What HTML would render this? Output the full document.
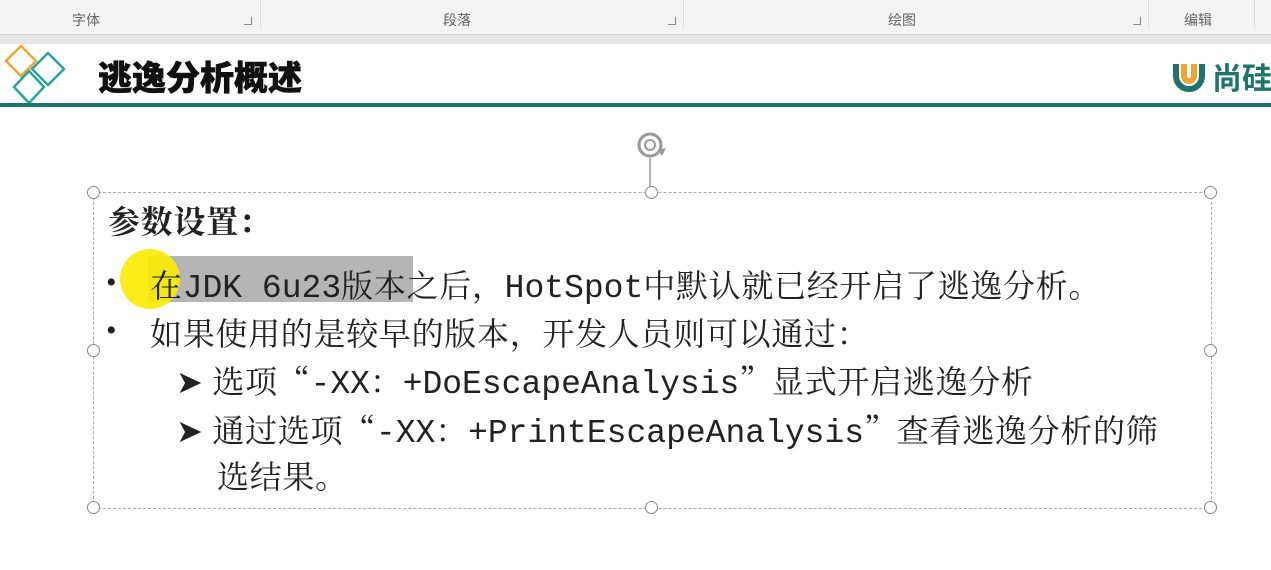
<!DOCTYPE html>
<html><head><meta charset="utf-8"><style>
body{margin:0;width:1271px;height:570px;overflow:hidden;background:#fff;position:relative;font-family:"Liberation Serif","Noto Serif CJK SC",serif;}
.rib{position:absolute;left:0;top:0;width:1271px;height:34px;background:#f3f3f3;}
.rib .l{position:absolute;top:10px;font:14px "Liberation Sans","Noto Sans CJK SC",sans-serif;color:#666;}
.rib .s{position:absolute;top:0;width:1px;height:28px;background:#dadada;}
.rib .c{position:absolute;top:17px;width:7px;height:7px;border-right:1px solid #888;border-bottom:1px solid #888;}
.sep{position:absolute;left:0;top:34px;width:1271px;height:9px;background:#e6e6e6;border-top:1px solid #d4d4d4;}
.title{position:absolute;left:98px;top:54px;font:900 34px "Noto Sans CJK SC",sans-serif;color:#111;line-height:44px;-webkit-text-stroke:0.6px #111;}
.bar{position:absolute;left:0;top:103px;width:1271px;height:4px;background:#1d7468;}
.t{position:absolute;font-family:"Noto Serif CJK SC",serif;font-size:32px;color:#222;white-space:nowrap;line-height:40px;letter-spacing:0.7px;}
.m{font-family:"Liberation Mono",monospace;font-size:33px;letter-spacing:0;}
.b{position:absolute;font:30px "Liberation Serif",serif;color:#222;}
.box{position:absolute;left:93px;top:192px;width:1117px;height:315px;border:1px dashed #aaa;}
.h{position:absolute;width:11px;height:11px;border:1.5px solid #888;border-radius:50%;background:#fff;}
</style></head><body>
<div class="rib">
<span class="l" style="left:72px">字体</span><span class="c" style="left:244px"></span><span class="s" style="left:260px"></span>
<span class="l" style="left:443px">段落</span><span class="c" style="left:668px"></span><span class="s" style="left:683px"></span>
<span class="l" style="left:888px">绘图</span><span class="c" style="left:1133px"></span><span class="s" style="left:1148px"></span>
<span class="l" style="left:1184px">编辑</span><span class="s" style="left:1254px"></span>
</div>
<div class="sep"></div>
<svg style="position:absolute;left:0;top:0" width="70" height="110">
<polygon points="21,46 36,61 21,76 6,61" fill="none" stroke="#f3a531" stroke-width="2.5"/>
<polygon points="48,53 64,69 48,85 32,69" fill="none" stroke="#2aa59a" stroke-width="2.5"/>
<polygon points="29,71 44,87 29,103 14,87" fill="none" stroke="#2aa59a" stroke-width="2.5"/>
</svg>
<div class="title">逃逸分析概述</div>
<svg style="position:absolute;left:1172px;top:58px" width="34" height="36"><path d="M4 6 V18 A13 13 0 0 0 30 18 V6" fill="none" stroke="#1d7468" stroke-width="6"/><path d="M12 6 V18 A5 5 0 0 0 22 18 V6" fill="none" stroke="#f3a531" stroke-width="6"/></svg>
<div style="position:absolute;left:1212px;top:58px;font:bold 30px 'Noto Sans CJK SC',sans-serif;color:#1d7468;white-space:nowrap;line-height:36px">尚硅</div>
<div class="bar"></div>
<svg style="position:absolute;left:634px;top:128px" width="40" height="62"><circle cx="16" cy="17" r="11" fill="none" stroke="#999" stroke-width="3"/><circle cx="16" cy="17" r="5" fill="none" stroke="#999" stroke-width="2"/><path d="M24 22 l8 -2 l-4 8z" fill="#999"/><line x1="16" y1="30" x2="16" y2="60" stroke="#999" stroke-width="1.5"/></svg>
<div class="box"></div>
<div class="h" style="left:87px;top:186px"></div><div class="h" style="left:645px;top:186px"></div><div class="h" style="left:1204px;top:186px"></div>
<div class="h" style="left:87px;top:344px"></div><div class="h" style="left:1204px;top:344px"></div>
<div class="h" style="left:87px;top:501px"></div><div class="h" style="left:645px;top:501px"></div><div class="h" style="left:1204px;top:501px"></div>
<div style="position:absolute;left:148px;top:256px;width:265px;height:46px;background:#b5b5b5"></div>
<div style="position:absolute;left:120px;top:249px;width:60px;height:60px;border-radius:50%;background:rgba(250,235,0,0.9)"></div>
<div class="t" style="left:108px;top:200px;font-size:32px;font-weight:bold">参数设置：</div>
<div class="b" style="left:106px;top:266px">•</div>
<div class="t" style="left:150px;top:264px">在<span class="m">JDK 6u23</span>版本之后，<span class="m">HotSpot</span>中默认就已经开启了逃逸分析。</div>
<div class="b" style="left:106px;top:314px">•</div>
<div class="t" style="left:150px;top:312px">如果使用的是较早的版本，开发人员则可以通过：</div>
<div class="t" style="left:176px;top:360px">➤ 选项“<span class="m">-XX</span>：<span class="m">+DoEscapeAnalysis</span>”显式开启逃逸分析</div>
<div class="t" style="left:176px;top:409px">➤ 通过选项“<span class="m">-XX</span>：<span class="m">+PrintEscapeAnalysis</span>”查看逃逸分析的筛</div>
<div class="t" style="left:217px;top:455px">选结果。</div>
</body></html>
